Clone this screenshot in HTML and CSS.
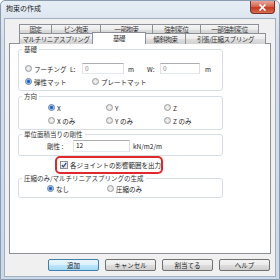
FILE: index.html
```html
<!DOCTYPE html>
<html lang="ja">
<head>
    <meta charset="UTF-8">
    <title>拘束の作成</title>
    <link rel="stylesheet" href="styles.css">
</head>
<body>
<div class="window">
    <div class="titlebar">
        <span class="title">拘束の作成</span>
        <button class="close">
            <svg width="9" height="7" viewBox="0 0 9 7"><path d="M1.5 0.5 L7.5 6.5 M7.5 0.5 L1.5 6.5" stroke="#fff" stroke-width="1.7"/></svg>
        </button>
    </div>

    <div class="client">
        <!-- Tab headers -->
        <div class="tabs">
            <div class="tabrow back">
                <div class="tab">固定</div>
                <div class="tab">ピン拘束</div>
                <div class="tab">一部拘束</div>
                <div class="tab">強制変位</div>
                <div class="tab">一部強制変位</div>
            </div>
            <div class="tabrow front">
                <div class="tab">マルチリニアスプリング</div>
                <div class="tab active">基礎</div>
                <div class="tab">傾斜拘束</div>
                <div class="tab">引張/圧縮スプリング</div>
            </div>
        </div>

        <div class="panel">
            <fieldset class="group g-base">
                <legend>基礎</legend>
                <div class="row">
                    <label class="choice c-footing"><span class="radio"></span>フーチング</label>
                    <span class="dim">L:</span>
                    <span class="input disabled in-l">0</span>
                    <span class="unit u-l">m</span>
                    <span class="dim d-w">W:</span>
                    <span class="input disabled in-w">0</span>
                    <span class="unit">m</span>
                </div>
                <div class="row">
                    <label class="choice c-mat"><span class="radio on"></span>弾性マット</label>
                    <label class="choice"><span class="radio"></span>プレートマット</label>
                </div>
            </fieldset>

            <fieldset class="group g-dir">
                <legend>方向</legend>
                <div class="grid3">
                    <label class="choice"><span class="radio on"></span>X</label>
                    <label class="choice"><span class="radio"></span>Y</label>
                    <label class="choice"><span class="radio"></span>Z</label>
                    <label class="choice"><span class="radio"></span>X のみ</label>
                    <label class="choice"><span class="radio"></span>Y のみ</label>
                    <label class="choice"><span class="radio"></span>Z のみ</label>
                </div>
            </fieldset>

            <fieldset class="group g-stiff">
                <legend>単位面積当りの剛性</legend>
                <div class="row stiff-row">
                    <span class="stiff-label">剛性 :</span>
                    <span class="input in-k">12</span>
                    <span class="unit">kN/m2/m</span>
                </div>
            </fieldset>

            <div class="highlight">
                <span class="check">
                    <svg width="6" height="6" viewBox="0 0 6 6"><path d="M0.8 3.2 L2.4 4.8 L5.3 0.9" fill="none" stroke="#2c4f86" stroke-width="1.3"/></svg>
                </span>
                各ジョイントの影響範囲を出力
            </div>

            <fieldset class="group g-comp">
                <legend>圧縮のみ/マルチリニアスプリングの生成</legend>
                <div class="row comp-row">
                    <label class="choice c-none"><span class="radio on"></span>なし</label>
                    <label class="choice"><span class="radio"></span>圧縮のみ</label>
                </div>
            </fieldset>
        </div>

        <div class="buttons">
            <button class="btn default">追加</button>
            <button class="btn">キャンセル</button>
            <button class="btn">割当てる</button>
            <button class="btn">ヘルプ</button>
        </div>
    </div>
</div>
</body>
</html>
```

FILE: styles.css
```css
* {
    box-sizing: border-box;
}
body {
    margin: 0;
    font-family: "Noto Sans CJK JP", "Noto Sans", sans-serif;
    font-size: 6.5px;
    color: #1a1a1a;
}
.window {
    width: 280px;
    height: 280px;
    background: linear-gradient(#e6edf5, #d3dfeb 40px, #cbd9e7);
    border: 1px solid #8a9bb0;
    border-radius: 5px 5px 0 0;
    display: flex;
    flex-direction: column;
}
.titlebar {
    height: 17px;
    display: flex;
    justify-content: space-between;
    align-items: flex-start;
}
.title {
    font-size: 7px;
    line-height: 15px;
    margin-left: 5px;
    color: #222;
}
.close {
    width: 25px;
    height: 13px;
    margin-right: 4px;
    padding: 0;
    border: 1px solid #7a3427;
    border-top: none;
    border-radius: 0 0 4px 4px;
    background: linear-gradient(#e8a699, #d7664f 45%, #c5391f 55%, #d66c50);
    display: flex;
    align-items: center;
    justify-content: center;
}
.client {
    flex: 1;
    margin: 0 3px 2px;
    background: #f0f0f0;
    border: 1px solid #9fb0c2;
    display: flex;
    flex-direction: column;
}

/* tabs */
.tabs {
    margin: 5px 0 0 14px;
    position: relative;
    z-index: 1;
}
.tabrow {
    display: flex;
}
.tab {
    height: 10px;
    line-height: 8px;
    text-align: center;
    white-space: nowrap;
    border: 1px solid #8d9097;
    border-bottom: none;
    margin-right: -1px;
    background: linear-gradient(#f5f5f5, #ebebeb 50%, #dedede 51%, #d2d2d2);
    letter-spacing: -0.4px;
    color: #333;
}
.tabrow.front {
    margin-top: -1px;
}
.tabrow.front .tab {
    height: 11px;
    line-height: 10px;
}
.back .tab:nth-child(1) { width: 33px; }
.back .tab:nth-child(2) { width: 50px; }
.back .tab:nth-child(3) { width: 53px; }
.back .tab:nth-child(4) { width: 49px; }
.back .tab:nth-child(5) { width: 59px; }
.front .tab:nth-child(1) { width: 74px; }
.front .tab:nth-child(2) { width: 54px; }
.front .tab:nth-child(3) { width: 41px; }
.front .tab:nth-child(4) { width: 81px; }
.tabrow.front .tab.active {
    background: #fff;
    height: 12px;
    margin-top: -1px;
    margin-bottom: -1px;
}

/* page */
.panel {
    margin: -1px 4px 0 4px;
    height: 211px;
    background: #fff;
    border: 1px solid #8d9097;
    padding: 1px 0 0 8px;
}
.group {
    width: 205px;
    margin: 0;
    padding: 0 0 2px 0;
    border: 1px solid #d5dfe5;
    border-radius: 3px;
}
.group legend {
    margin-left: 3px;
    padding: 0 2px;
    line-height: 8px;
    font-size: 6.5px;
    color: #333;
}
.row {
    display: flex;
    align-items: center;
    height: 13px;
}
.g-base {
    padding-top: 9px;
}
.g-base .row {
    padding-left: 6px;
}
.choice {
    display: flex;
    align-items: center;
    gap: 2px;
    white-space: nowrap;
}
.c-footing { width: 45px; }
.c-mat { width: 67px; }
.radio {
    width: 7px;
    height: 7px;
    border-radius: 50%;
    border: 1px solid #9a9d9f;
    background: radial-gradient(circle at 50% 50%, #f6f6f6, #d6d6d6);
    flex: none;
}
.radio.on {
    border-color: #5d7fa6;
    background: radial-gradient(circle at 50% 50%, #1c57b8 0, #2b6fd1 1.3px, #b9d3ef 2.3px, #eef3f9 3px);
}
.dim {
    width: 12px;
}
.d-w {
    width: 13px;
}
.input {
    height: 11px;
    line-height: 9px;
    padding-left: 2px;
    border: 1px solid #abadb3;
    border-color: #abadb3 #dbdfe6 #e3e9ef #e2e3ea;
    background: #fff;
}
.input.disabled {
    color: #8a8a8a;
}
.in-l {
    width: 42px;
    margin-right: 4px;
}
.u-l {
    width: 19px;
}
.in-w {
    width: 40px;
    margin-right: 5px;
}

.g-dir {
    margin-top: 1px;
    padding-top: 1px;
}
.grid3 {
    display: grid;
    grid-template-columns: 58px 58px 58px;
    grid-auto-rows: 13px;
    align-items: center;
    padding-left: 29px;
}

.g-stiff {
    padding: 2px 0 3px 0;
}
.stiff-row {
    height: 12px;
    padding-left: 28px;
}
.stiff-label {
    width: 26px;
}
.in-k {
    width: 57px;
    height: 12px;
    margin-right: 3px;
    color: #222;
}

.highlight {
    display: inline-flex;
    align-items: center;
    gap: 2px;
    height: 18px;
    width: 108px;
    margin-left: 37px;
    padding-left: 3px;
    border: 2px solid #e3282c;
    border-radius: 5px;
    white-space: nowrap;
}
.check {
    width: 8px;
    height: 8px;
    border: 1px solid #8f8f8f;
    background: linear-gradient(#f4f4f4, #e2e2e2);
    display: flex;
    align-items: center;
    justify-content: center;
}

.comp-row {
    padding-left: 28px;
}
.c-none {
    width: 60px;
}

/* dialog buttons */
.buttons {
    display: flex;
    justify-content: flex-end;
    gap: 6px;
    margin-top: 5px;
    padding-right: 5px;
}
.btn {
    width: 51px;
    height: 12px;
    padding: 0;
    font-family: inherit;
    font-size: 6.5px;
    line-height: 10px;
    color: #1a1a1a;
    border: 1px solid #707070;
    border-radius: 2px;
    background: linear-gradient(#f3f3f3, #ebebeb 50%, #dddddd 51%, #cfcfcf);
}
.btn.default {
    border-color: #3c7fb1;
    background: linear-gradient(#eaf6fd, #d9f0fc 50%, #bee6fd 51%, #a7d9f5);
}
```
